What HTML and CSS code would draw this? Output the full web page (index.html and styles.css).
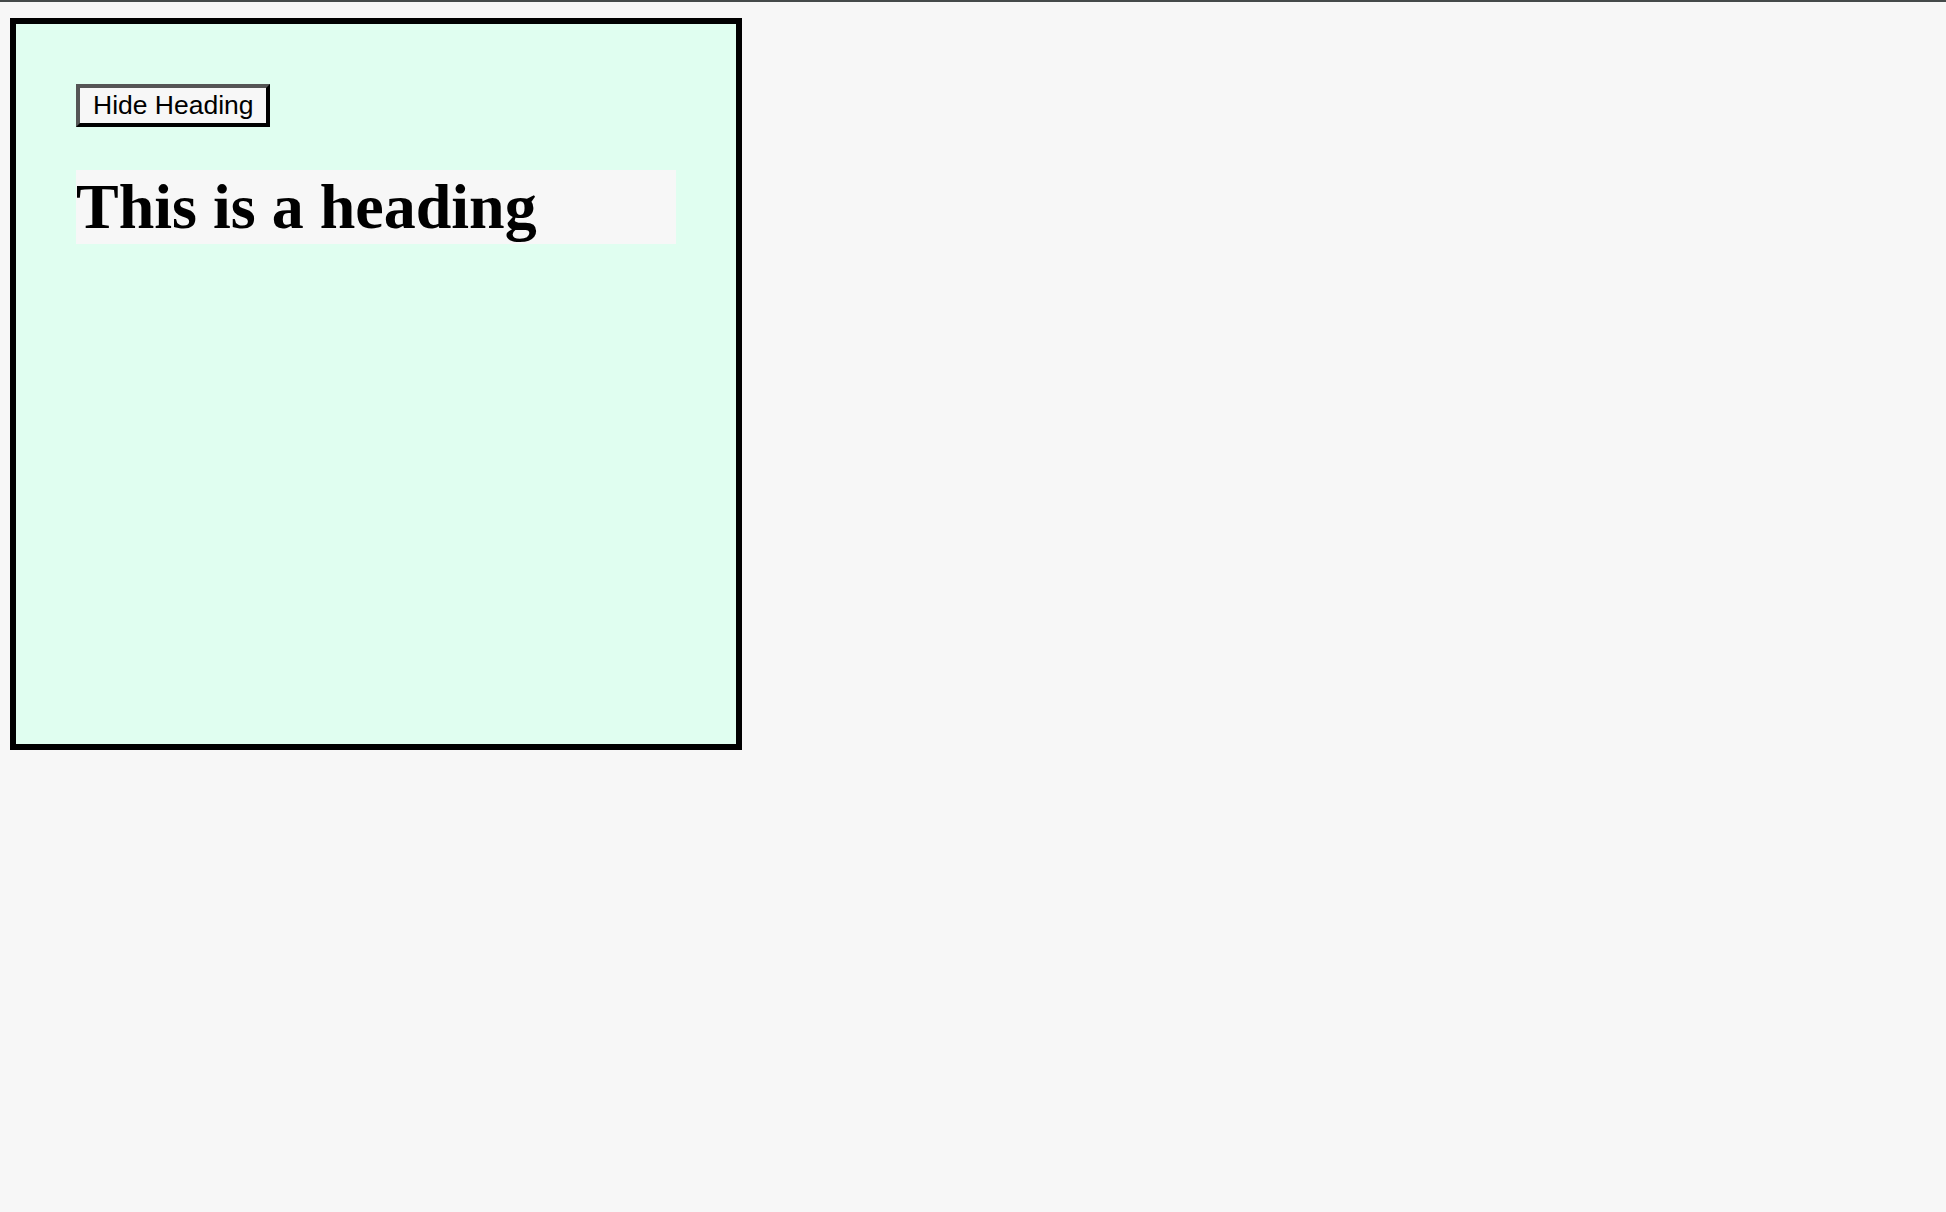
FILE: index.html
```html
<!DOCTYPE html>
<html>
<head>
<meta charset="utf-8">
<link rel="stylesheet" href="styles.css">
</head>
<body>
<div class="topbar"></div>
<main class="page">
  <section class="box">
    <button class="toggle" type="button">Hide Heading</button>
    <h1 class="heading">This is a heading</h1>
  </section>
</main>
</body>
</html>
```
FILE: styles.css
```css
html, body {
  margin: 0;
  padding: 0;
  background: #f7f7f7;
}
.topbar {
  height: 2px;
  background: #454a4a;
}
.page {
  padding: 16px 10px;
}
.box {
  width: 600px;
  height: 600px;
  padding: 60px;
  background: #e0fef0;
  border: 6px solid #000;
  display: flex;
  flex-direction: column;
  align-items: flex-start;
}
.toggle {
  font-family: "Liberation Sans", Arial, sans-serif;
  font-size: 26.5px;
  line-height: 30px;
  color: #000;
  background: #f7f7f7;
  border: 4px solid;
  border-color: #555 #000 #000 #555;
  padding: 2px 13px 3px 13px;
  width: 194px;
  height: 43px;
  margin: 0;
  border-radius: 0;
  white-space: nowrap;
}
.heading {
  align-self: stretch;
  margin: 43px 0 0 0;
  font-family: "Liberation Serif", "Times New Roman", serif;
  font-weight: bold;
  font-size: 64px;
  line-height: 74px;
  height: 74px;
  background: #f7f7f7;
  color: #000;
}
```
